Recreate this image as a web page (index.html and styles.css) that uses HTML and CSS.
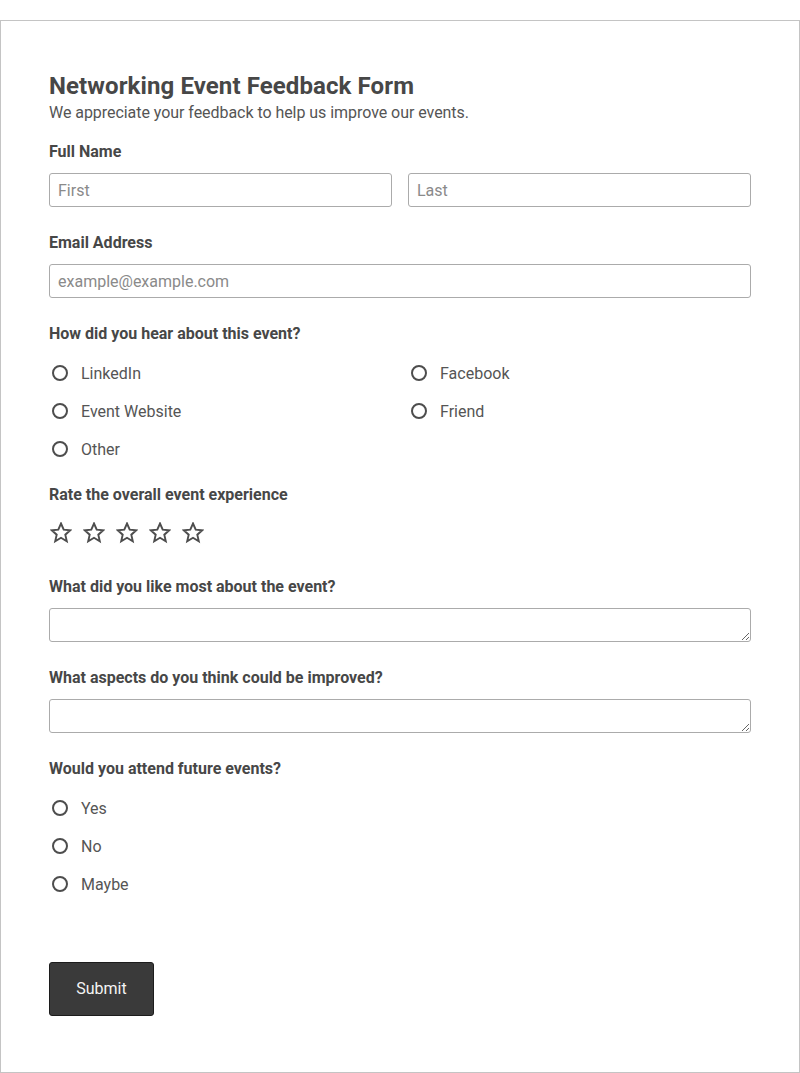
FILE: index.html
```html
<html>

<head>
  <meta charset="utf-8" />
  <title>Networking Event Feedback Form</title>
  <link rel="stylesheet" href="styles.css">
</head>

<body>
  <form class="card">
    <h1 class="form-title">Networking Event Feedback Form</h1>
    <p class="form-sub">We appreciate your feedback to help us improve our events.</p>

    <div class="field">
      <label class="lbl">Full Name</label>
      <div class="name-row">
        <input type="text" class="txt" placeholder="First" />
        <input type="text" class="txt" placeholder="Last" />
      </div>
    </div>

    <div class="field">
      <label class="lbl">Email Address</label>
      <input type="email" class="txt" placeholder="example@example.com" />
    </div>

    <div class="field field-opts">
      <label class="lbl lbl-opts">How did you hear about this event?</label>
      <div class="opts two-col">
        <label class="opt"><input type="radio" name="src" /><span>LinkedIn</span></label>
        <label class="opt"><input type="radio" name="src" /><span>Facebook</span></label>
        <label class="opt"><input type="radio" name="src" /><span>Event Website</span></label>
        <label class="opt"><input type="radio" name="src" /><span>Friend</span></label>
        <label class="opt"><input type="radio" name="src" /><span>Other</span></label>
      </div>
    </div>

    <div class="field field-rate">
      <label class="lbl lbl-rate">Rate the overall event experience</label>
      <div class="stars">
        <svg class="star" viewBox="0 0 22 22"><path d="M11 1.5l2.7 6.2 6.6.6-5 4.4 1.5 6.6L11 15.8l-5.8 3.5 1.5-6.6-5-4.4 6.6-.6z" /></svg>
        <svg class="star" viewBox="0 0 22 22"><path d="M11 1.5l2.7 6.2 6.6.6-5 4.4 1.5 6.6L11 15.8l-5.8 3.5 1.5-6.6-5-4.4 6.6-.6z" /></svg>
        <svg class="star" viewBox="0 0 22 22"><path d="M11 1.5l2.7 6.2 6.6.6-5 4.4 1.5 6.6L11 15.8l-5.8 3.5 1.5-6.6-5-4.4 6.6-.6z" /></svg>
        <svg class="star" viewBox="0 0 22 22"><path d="M11 1.5l2.7 6.2 6.6.6-5 4.4 1.5 6.6L11 15.8l-5.8 3.5 1.5-6.6-5-4.4 6.6-.6z" /></svg>
        <svg class="star" viewBox="0 0 22 22"><path d="M11 1.5l2.7 6.2 6.6.6-5 4.4 1.5 6.6L11 15.8l-5.8 3.5 1.5-6.6-5-4.4 6.6-.6z" /></svg>
      </div>
    </div>

    <div class="field">
      <label class="lbl">What did you like most about the event?</label>
      <textarea class="txt area"></textarea>
    </div>

    <div class="field">
      <label class="lbl">What aspects do you think could be improved?</label>
      <textarea class="txt area"></textarea>
    </div>

    <div class="field field-last">
      <label class="lbl lbl-opts">Would you attend future events?</label>
      <div class="opts">
        <label class="opt"><input type="radio" name="again" /><span>Yes</span></label>
        <label class="opt"><input type="radio" name="again" /><span>No</span></label>
        <label class="opt"><input type="radio" name="again" /><span>Maybe</span></label>
      </div>
    </div>

    <button type="button" class="btn-submit">Submit</button>
  </form>
</body>

</html>
```

FILE: styles.css
```css
body {
  margin: 0;
  padding-top: 20px;
  background-color: white;
  font-family: Roboto, "Liberation Sans", Arial, sans-serif;
  color: #4a4a4a;
}

.card {
  display: block;
  margin: 0;
  border: 1px solid #c4c4c4;
  padding: 48px 48px 56px;
}

.form-title {
  margin: 1px 0 1px;
  font-size: 24px;
  line-height: 32px;
  font-weight: 700;
  letter-spacing: 0.1px;
  color: #474747;
}

.form-sub {
  margin: 0;
  font-size: 16px;
  line-height: 20px;
  letter-spacing: -0.05px;
  color: #555;
}

.field {
  margin-bottom: 25px;
}

.form-sub + .field {
  margin-top: 18px;
}

.lbl {
  display: block;
  padding-top: 1px;
  font-size: 16px;
  line-height: 20px;
  font-weight: 700;
  color: #474747;
  margin-bottom: 11px;
}

.lbl-opts {
  margin-bottom: 10px;
}

.lbl-rate {
  margin-bottom: 16px;
}

.name-row {
  display: flex;
  gap: 16px;
}

.txt {
  display: block;
  box-sizing: border-box;
  width: 100%;
  height: 34px;
  margin: 0;
  padding: 0 8px;
  border: 1px solid #ababab;
  border-radius: 3px;
  font-family: inherit;
  font-size: 16px;
  color: #444;
  background: white;
}

.txt::placeholder {
  color: #8a8a8a;
}

.area {
  padding: 6px 8px;
  resize: vertical;
}

.field-opts {
  margin-bottom: 16px;
}

.opts {
  display: grid;
  grid-template-columns: 1fr;
}

.two-col {
  grid-template-columns: 1fr 1fr;
  column-gap: 16px;
}

.opt {
  display: flex;
  align-items: center;
  height: 38px;
  font-size: 16px;
  color: #555;
}

.opt input {
  appearance: none;
  -webkit-appearance: none;
  box-sizing: border-box;
  width: 16px;
  height: 16px;
  margin: 0 13px 0 3px;
  border: 2px solid #4d4d4d;
  border-radius: 50%;
  background: white;
}

.field-rate {
  margin-bottom: 31px;
}

.stars {
  display: flex;
  gap: 11px;
  height: 24px;
  align-items: center;
  padding-left: 1px;
}

.star {
  width: 22px;
  height: 22px;
  fill: none;
  stroke: #4d4d4d;
  stroke-width: 1.9;
  stroke-linejoin: miter;
}

.field-last {
  margin-bottom: 59px;
}

.btn-submit {
  display: block;
  width: 105px;
  height: 54px;
  padding: 0 0 1px;
  background-color: #3a3a3a;
  border: 1px solid #1c1c1c;
  border-radius: 3px;
  color: #f4f4f4;
  font-family: inherit;
  font-size: 16px;
}
```
